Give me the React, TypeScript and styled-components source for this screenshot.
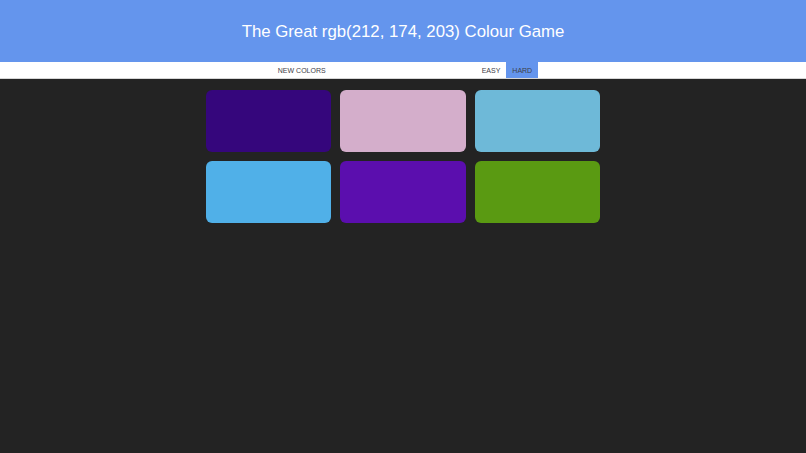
import styled, { createGlobalStyle } from "styled-components";

const GlobalStyle = createGlobalStyle`
    body {
        margin: 0;
        background-color: #232323;
        font-family: "Liberation Sans", Arial, sans-serif;
    }
`;

const Header = styled.header`
    display: flex;
    align-items: center;
    justify-content: center;
    height: 62px;
    padding-top: 1px;
    box-sizing: border-box;
    background-color: #6495ed;
`;

const Title = styled.h1`
    margin: 0;
    color: #ffffff;
    font-size: 16.8px;
    font-weight: normal;
`;

const Stripe = styled.nav`
    display: flex;
    justify-content: center;
    align-items: stretch;
    height: 16px;
    padding-left: 4px;
    background-color: #ffffff;
    border-bottom: 1px solid #d6d6d6;
`;

const NavButton = styled.button<{ $selected?: boolean }>`
    border: none;
    margin: 0;
    padding: 0 6px;
    font-family: inherit;
    font-size: 7px;
    text-transform: uppercase;
    color: #3c4048;
    background-color: ${(props) => (props.$selected ? "#6495ed" : "#ffffff")};
    cursor: pointer;
`;

const Message = styled.span`
    display: inline-block;
    width: 144px;
`;

const Board = styled.div`
    display: grid;
    grid-template-columns: repeat(3, 1fr);
    grid-auto-rows: 62px;
    gap: 9px;
    width: 394px;
    margin: 11px auto 0;
`;

const Square = styled.div<{ $color: string }>`
    border-radius: 6px;
    background-color: ${(props) => props.$color};
`;

const colors = [
    "rgb(53, 6, 124)",
    "rgb(212, 174, 203)",
    "rgb(110, 185, 216)",
    "rgb(80, 176, 232)",
    "rgb(91, 14, 174)",
    "rgb(90, 154, 18)",
];

function App() {
    return (
        <>
            <GlobalStyle />
            <Header>
                <Title>The Great rgb(212, 174, 203) Colour Game</Title>
            </Header>
            <Stripe>
                <NavButton>New Colors</NavButton>
                <Message />
                <NavButton>Easy</NavButton>
                <NavButton $selected>Hard</NavButton>
            </Stripe>
            <Board>
                {colors.map((c) => (
                    <Square key={c} $color={c} />
                ))}
            </Board>
        </>
    );
}

export default App;
